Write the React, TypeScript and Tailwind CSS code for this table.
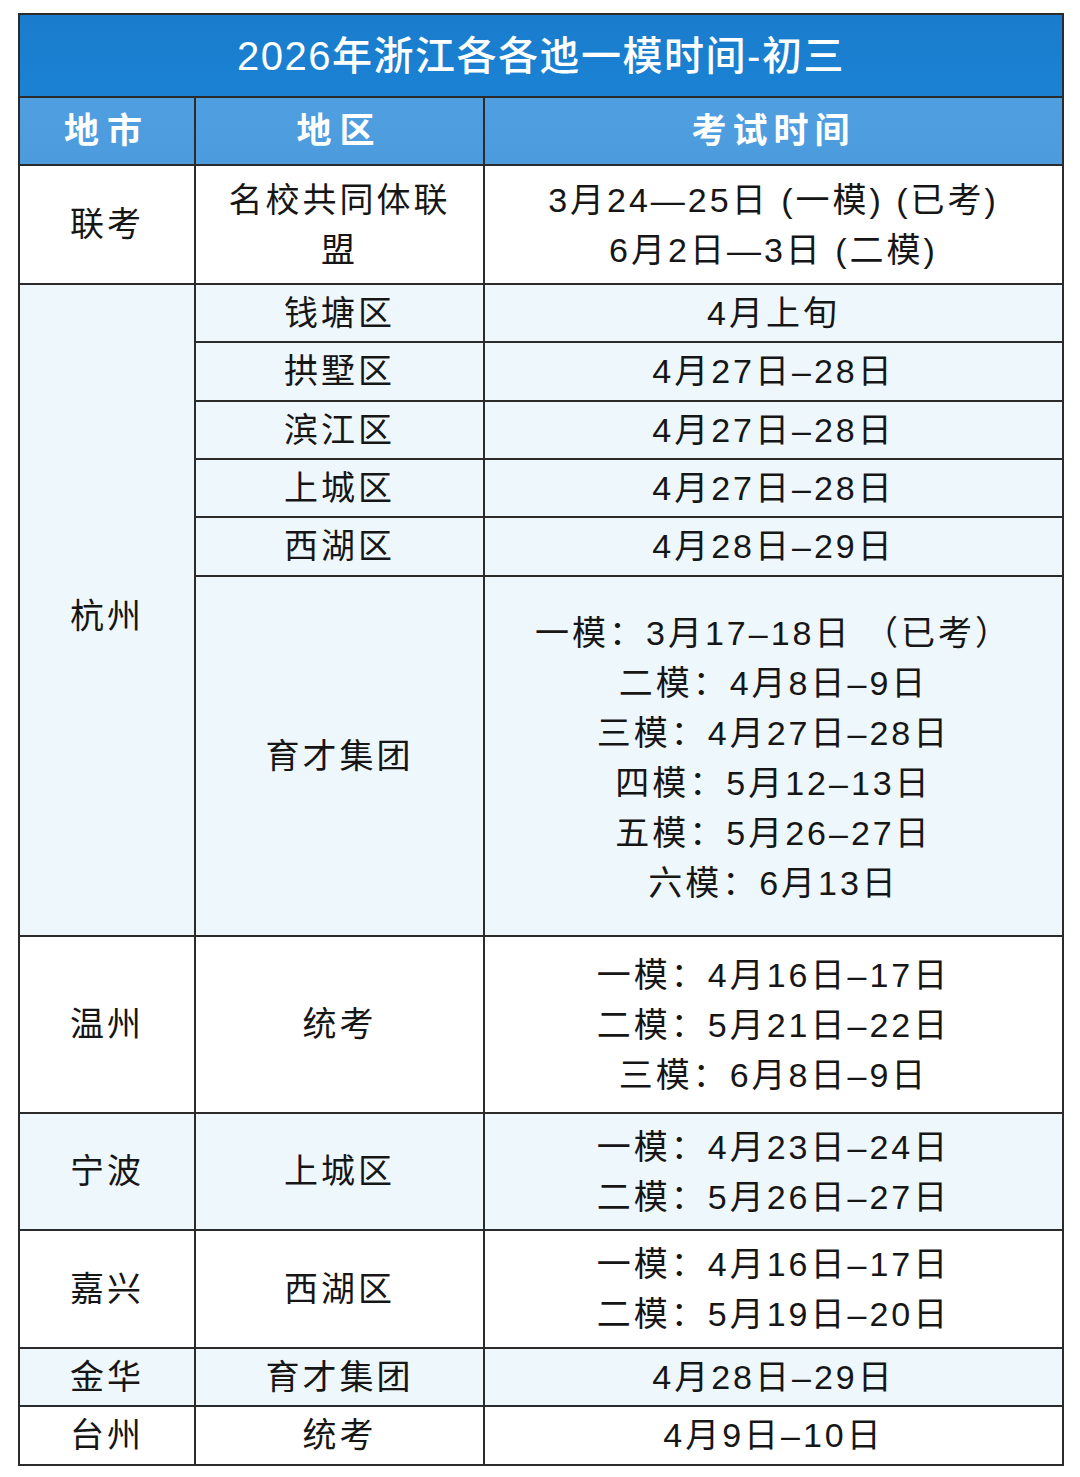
import React from "react";

const font = { fontFamily: '"Liberation Sans", "Noto Sans CJK SC", sans-serif' };

const td = "border-2 border-[#2b2b2b] text-center align-middle p-0";

function Lines({ lines }: { lines: string[] }) {
  return (
    <div className="flex flex-col items-center leading-[50px]">
      {lines.map((l, i) => (
        <div key={i} className="whitespace-pre">{l}</div>
      ))}
    </div>
  );
}

export default function App() {
  const light = "bg-[#eef7fc]";
  return (
    <div className="w-[1080px] h-[1477px] bg-white pt-[13px] pl-[18px]" style={font}>
      <table className="border-collapse w-[1044px] table-fixed text-[#161616] text-[34px] tracking-[3px]">
        <colgroup>
          <col className="w-[176px]" />
          <col className="w-[289px]" />
          <col className="w-[579px]" />
        </colgroup>
        <tbody>
          <tr className="h-[83px]">
            <td colSpan={3} className={`${td} bg-gradient-to-b from-[#1a7ccd] to-[#1b82d3] text-white text-[40px] font-medium tracking-[1.5px]`}>
              2026年浙江各各迆一模时间-初三
            </td>
          </tr>
          <tr className="h-[68px] bg-gradient-to-b from-[#4f9fe1] to-[#4c9bdd] text-white text-[35px] font-bold">
            <td className={`${td} tracking-[8px]`}>地市</td>
            <td className={`${td} tracking-[8px]`}>地区</td>
            <td className={`${td} tracking-[6px]`}>考试时间</td>
          </tr>
          <tr className="h-[119px] bg-white">
            <td className={td}>联考</td>
            <td className={td}>
              <Lines lines={["名校共同体联", "盟"]} />
            </td>
            <td className={td}>
              <Lines lines={["3月24—25日 (一模) (已考)", "6月2日—3日 (二模)"]} />
            </td>
          </tr>
          <tr className={`h-[58px] ${light}`}>
            <td rowSpan={6} className={td}>
              <div className="pt-[12px]">杭州</div>
            </td>
            <td className={td}>钱塘区</td>
            <td className={td}>4月上旬</td>
          </tr>
          <tr className={`h-[59px] ${light}`}>
            <td className={td}>拱墅区</td>
            <td className={td}>4月27日–28日</td>
          </tr>
          <tr className={`h-[58px] ${light}`}>
            <td className={td}>滨江区</td>
            <td className={td}>4月27日–28日</td>
          </tr>
          <tr className={`h-[58px] ${light}`}>
            <td className={td}>上城区</td>
            <td className={td}>4月27日–28日</td>
          </tr>
          <tr className={`h-[59px] ${light}`}>
            <td className={td}>西湖区</td>
            <td className={td}>4月28日–29日</td>
          </tr>
          <tr className={`h-[360px] ${light}`}>
            <td className={td}>育才集团</td>
            <td className={td}>
              <div className="pt-[4px]">
                <Lines
                  lines={[
                    "一模：3月17–18日 （已考）",
                    "二模：4月8日–9日",
                    "三模：4月27日–28日",
                    "四模：5月12–13日",
                    "五模：5月26–27日",
                    "六模：6月13日",
                  ]}
                />
              </div>
            </td>
          </tr>
          <tr className="h-[177px] bg-white">
            <td className={td}>温州</td>
            <td className={td}>统考</td>
            <td className={td}>
              <Lines lines={["一模：4月16日–17日", "二模：5月21日–22日", "三模：6月8日–9日"]} />
            </td>
          </tr>
          <tr className={`h-[117px] ${light}`}>
            <td className={td}>宁波</td>
            <td className={td}>上城区</td>
            <td className={td}>
              <Lines lines={["一模：4月23日–24日", "二模：5月26日–27日"]} />
            </td>
          </tr>
          <tr className="h-[118px] bg-white">
            <td className={td}>嘉兴</td>
            <td className={td}>西湖区</td>
            <td className={td}>
              <Lines lines={["一模：4月16日–17日", "二模：5月19日–20日"]} />
            </td>
          </tr>
          <tr className={`h-[58px] ${light}`}>
            <td className={td}>金华</td>
            <td className={td}>育才集团</td>
            <td className={td}>4月28日–29日</td>
          </tr>
          <tr className="h-[59px] bg-white">
            <td className={td}>台州</td>
            <td className={td}>统考</td>
            <td className={td}>4月9日–10日</td>
          </tr>
        </tbody>
      </table>
    </div>
  );
}
